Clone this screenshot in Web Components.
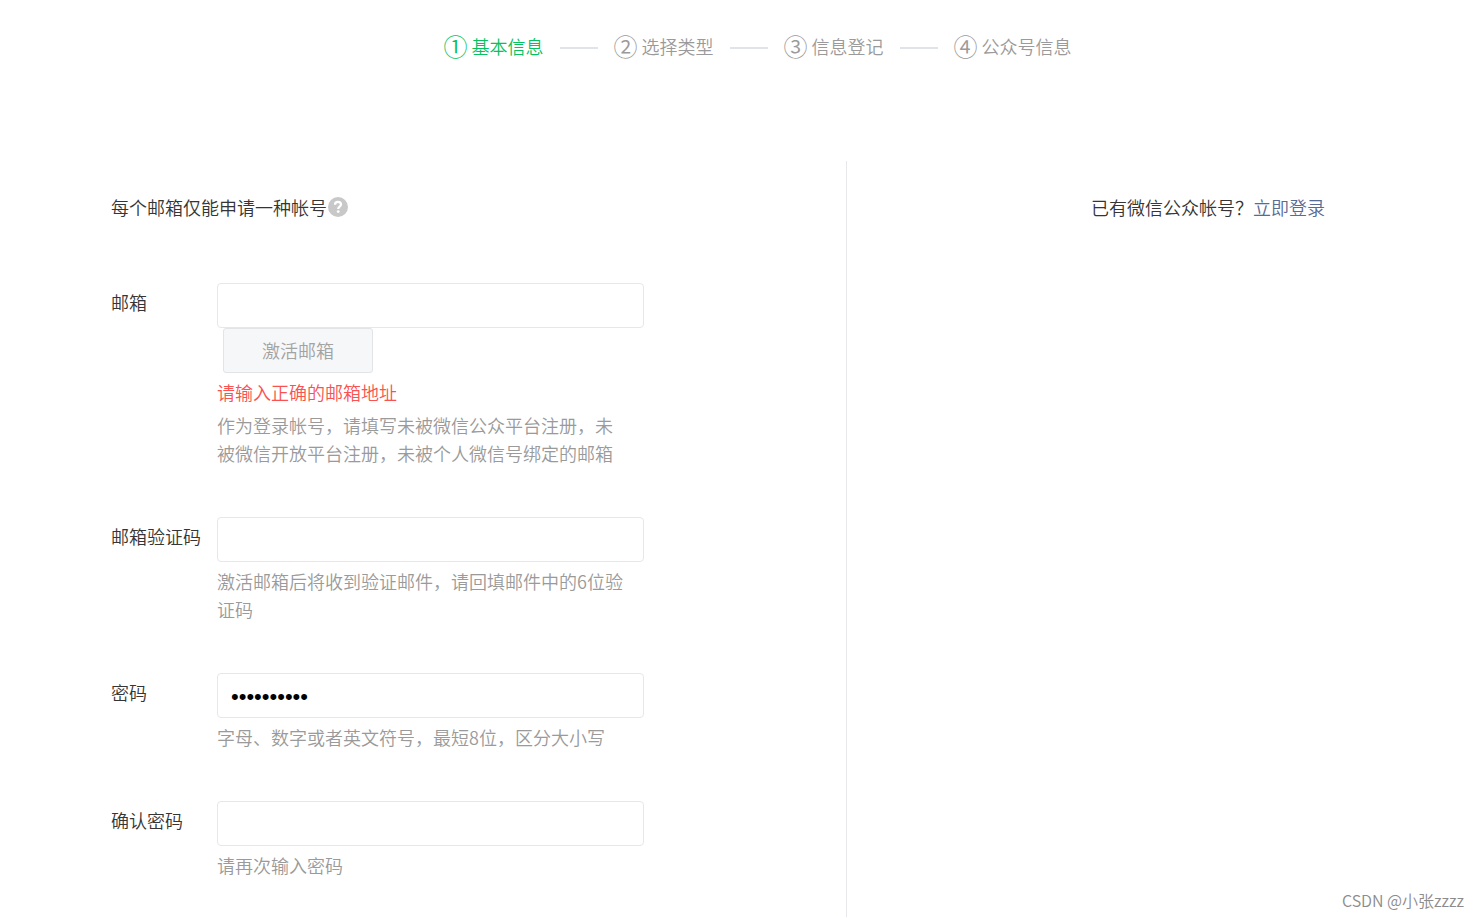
<!DOCTYPE html>
<html lang="zh-CN">
<head>
<meta charset="utf-8">
<title>公众号注册</title>
<style>
  html { background: #fff; }
  body {
    margin: 0;
    color: #353535;
    font: 350 18px/28px "Noto Sans CJK SC", sans-serif;
  }
</style>
</head>
<body>
<register-page></register-page>

<template id="register-page">
  <style>
    :host { display: flex; flex-direction: column; min-height: 100vh; position: relative; box-sizing: border-box; }
    main { display: grid; grid-template-columns: 847fr 632fr; flex: 1; margin-bottom: 1px; }
    .form-side { border-right: 1px solid #e7e7eb; padding: 32px 32px 38px 111px; }
    .login-side { padding: 32px 0 32px 90px; text-align: center; }
    p { margin: 0; }
    .intro { display: flex; align-items: center; gap: 1px; margin-bottom: 62px; }
    form { display: flex; flex-direction: column; gap: 50px; }
    a { color: #576b95; text-decoration: none; }
    .mark { position: absolute; right: 15px; bottom: 4px; font-size: 16px; color: #8c8c8c; }
  </style>
  <step-bar>
    <step-item current number="①">基本信息</step-item>
    <step-item number="②">选择类型</step-item>
    <step-item number="③">信息登记</step-item>
    <step-item number="④">公众号信息</step-item>
  </step-bar>
  <main>
    <section class="form-side">
      <p class="intro">每个邮箱仅能申请一种帐号<help-icon></help-icon></p>
      <form>
        <form-field label="邮箱" type="email">
          <send-button slot="action">激活邮箱</send-button>
          <span slot="error">请输入正确的邮箱地址</span>
          作为登录帐号，请填写未被微信公众平台注册，未被微信开放平台注册，未被个人微信号绑定的邮箱
        </form-field>
        <form-field label="邮箱验证码" type="text">激活邮箱后将收到验证邮件，请回填邮件中的6位验证码</form-field>
        <form-field label="密码" type="password" value="abcdefghij">字母、数字或者英文符号，最短8位，区分大小写</form-field>
        <form-field label="确认密码" type="password">请再次输入密码</form-field>
      </form>
    </section>
    <aside class="login-side"><p>已有微信公众帐号？<a href="#login">立即登录</a></p></aside>
  </main>
  <span class="mark">CSDN @小张zzzz</span>
</template>

<template id="step-bar">
  <style>
    :host { display: flex; justify-content: center; gap: 16px; padding: 32px 0 101px 36px; }
  </style>
  <slot></slot>
</template>

<template id="step-item">
  <style>
    :host { display: flex; align-items: center; gap: 16px; color: #9a9a9a; }
    :host([current]) { color: #07c160; }
    :host(:not(:first-of-type))::before { content: ""; width: 38px; height: 2px; margin-top: 4px; background: #e0e4e9; }
    .step { display: flex; align-items: center; gap: 4px; }
    .number { font-size: 24px; }
  </style>
  <span class="step"><span class="number"></span><span><slot></slot></span></span>
</template>

<template id="help-icon">
  <style>
    :host { display: block; width: 20px; height: 20px; }
    svg { display: block; }
  </style>
  <svg width="20" height="20" viewBox="0 0 20 20" role="img" aria-label="帮助">
    <circle cx="10" cy="10" r="10" fill="#c8c8c8"/>
    <path d="M7 7.8C7 5.8 8.2 4.8 10 4.8s3 1 3 2.7c0 2-2.8 2.2-2.8 4.4" fill="none" stroke="#fff" stroke-width="2.3"/>
    <circle cx="10.2" cy="14.6" r="1.4" fill="#fff"/>
  </svg>
</template>

<template id="send-button">
  <style>
    :host { display: block; margin-left: 6px; }
    button {
      display: block; width: 150px; height: 45px; padding: 0 0 2px;
      border: 1px solid #e2e4e6; border-radius: 3px;
      background: #f6f7f9; color: #a3a3a3; font: inherit;
    }
  </style>
  <button type="button" disabled><slot></slot></button>
</template>

<template id="form-field">
  <style>
    :host { display: grid; grid-template-columns: 106px minmax(0, 427px); }
    label { padding-top: 5px; white-space: nowrap; }
    input {
      display: block; width: 100%; height: 45px; box-sizing: border-box;
      padding: 0 13px; border: 1px solid #e7e7eb; border-radius: 4px;
      background: #fff; color: #000; font: 18px "Noto Sans CJK SC", sans-serif; outline: none;
    }
    input[type="password"] { padding-top: 2px; font: 22px "Liberation Sans", sans-serif; }
    slot[name="error"]::slotted(*) { display: block; margin-top: 5px; color: #fa5151; }
    .hint { max-width: 410px; margin: 5px 0 0; color: #9a9a9a; }
  </style>
  <label for="control"></label>
  <div>
    <input id="control">
    <slot name="action"></slot>
    <slot name="error"></slot>
    <p class="hint"><slot></slot></p>
  </div>
</template>

<script>
  class TemplateElement extends HTMLElement {
    constructor() {
      super();
      const template = document.getElementById(this.localName);
      this.attachShadow({ mode: "open" }).append(template.content.cloneNode(true));
    }
  }

  customElements.define("step-bar", class extends TemplateElement {});
  customElements.define("help-icon", class extends TemplateElement {});
  customElements.define("send-button", class extends TemplateElement {});

  customElements.define("step-item", class extends TemplateElement {
    connectedCallback() {
      this.shadowRoot.querySelector(".number").textContent = this.getAttribute("number");
    }
  });

  customElements.define("form-field", class extends TemplateElement {
    connectedCallback() {
      const input = this.shadowRoot.querySelector("input");
      this.shadowRoot.querySelector("label").textContent = this.getAttribute("label");
      input.type = this.getAttribute("type") || "text";
      input.value = this.getAttribute("value") || "";
    }
  });

  customElements.define("register-page", class extends TemplateElement {});
</script>
</body>
</html>
